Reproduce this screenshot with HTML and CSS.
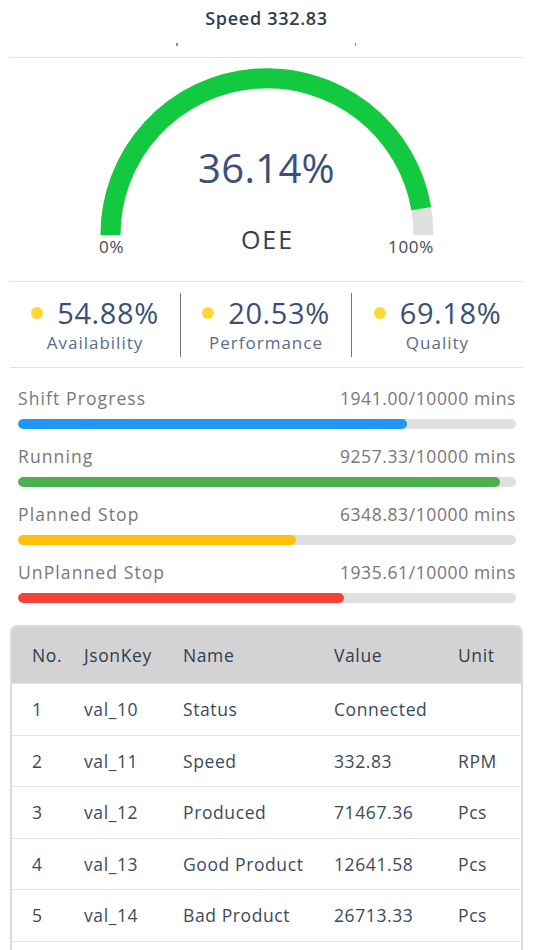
FILE: index.html
```html
<!DOCTYPE html>
<html>
<head>
<meta charset="utf-8">
<link rel="stylesheet" href="styles.css">
</head>
<body>
<div class="page">
  <header class="top">
    <div class="title">Speed 332.83</div>
    <div class="marks"><span class="mark"></span><span class="mark"></span></div>
  </header>

  <section class="gauge">
    <svg class="gauge-svg" width="354" height="186" viewBox="0 0 354 186">
      <path d="M 20.5 177 A 156.5 156.5 0 0 1 333.5 177" fill="none" stroke="#e0e0e0" stroke-width="20"/>
      <path d="M 20.5 177 A 156.5 156.5 0 0 1 331.3 150.6" fill="none" stroke="#12c940" stroke-width="20"/>
    </svg>
    <div class="gauge-value">36.14%</div>
    <div class="gauge-name">OEE</div>
    <div class="gauge-min">0%</div>
    <div class="gauge-max">100%</div>
  </section>

  <section class="stats">
    <div class="stat">
      <div class="stat-value"><span class="dot"></span>54.88%</div>
      <div class="stat-label">Availability</div>
    </div>
    <div class="stat">
      <div class="stat-value"><span class="dot"></span>20.53%</div>
      <div class="stat-label">Performance</div>
    </div>
    <div class="stat">
      <div class="stat-value"><span class="dot"></span>69.18%</div>
      <div class="stat-label">Quality</div>
    </div>
  </section>

  <section class="progress">
    <div class="prow">
      <div class="plabels"><span>Shift Progress</span><span>1941.00/10000 mins</span></div>
      <div class="track"><div class="fill blue" style="width:78.2%"></div></div>
    </div>
    <div class="prow">
      <div class="plabels"><span>Running</span><span>9257.33/10000 mins</span></div>
      <div class="track"><div class="fill green" style="width:96.8%"></div></div>
    </div>
    <div class="prow">
      <div class="plabels"><span>Planned Stop</span><span>6348.83/10000 mins</span></div>
      <div class="track"><div class="fill yellow" style="width:55.8%"></div></div>
    </div>
    <div class="prow">
      <div class="plabels"><span>UnPlanned Stop</span><span>1935.61/10000 mins</span></div>
      <div class="track"><div class="fill red" style="width:65.4%"></div></div>
    </div>
  </section>

  <section class="card">
    <div class="trow thead">
      <div>No.</div><div>JsonKey</div><div>Name</div><div>Value</div><div>Unit</div>
    </div>
    <div class="trow">
      <div>1</div><div>val_10</div><div>Status</div><div>Connected</div><div></div>
    </div>
    <div class="trow">
      <div>2</div><div>val_11</div><div>Speed</div><div>332.83</div><div>RPM</div>
    </div>
    <div class="trow">
      <div>3</div><div>val_12</div><div>Produced</div><div>71467.36</div><div>Pcs</div>
    </div>
    <div class="trow">
      <div>4</div><div>val_13</div><div>Good Product</div><div>12641.58</div><div>Pcs</div>
    </div>
    <div class="trow">
      <div>5</div><div>val_14</div><div>Bad Product</div><div>26713.33</div><div>Pcs</div>
    </div>
    <div class="trow"></div>
  </section>
</div>
</body>
</html>
```

FILE: styles.css
```css
* { box-sizing: border-box; }
html, body { margin: 0; padding: 0; background: #ffffff; }
body {
  font-family: "Open Sans", "Liberation Sans", sans-serif;
  color: #2c3e50;
  overflow: hidden;
}
.page {
  padding: 0 11px 0 10px;
}
.top {
  height: 58px;
  border-bottom: 1.5px solid #e3e3e3;
  display: flex;
  flex-direction: column;
  align-items: center;
}
.title {
  margin-top: 6px;
  font-size: 18px;
  font-weight: 600;
  letter-spacing: 0.7px;
  color: #2c3e50;
  line-height: 24px;
}
.marks {
  margin-top: 13px;
  width: 100%;
  display: flex;
  justify-content: space-between;
  padding: 0 167px 0 166px;
}
.mark {
  width: 1.5px;
  height: 3px;
  background: #8a8a8a;
}

.gauge {
  position: relative;
  height: 224px;
  border-bottom: 1.5px solid #e3e3e3;
  display: flex;
  justify-content: center;
}
.gauge-svg {
  margin-left: 1px;
}
.gauge-value {
  position: absolute;
  left: 0; right: 0;
  top: 82px;
  text-align: center;
  font-size: 40px;
  font-weight: 400;
  color: #3b4f7a;
  letter-spacing: 0.3px;
}
.gauge-name {
  position: absolute;
  left: 0; right: 0;
  top: 164px;
  text-align: center;
  font-size: 25px;
  color: #2f4058;
  letter-spacing: 2px;
  padding-left: 2px;
}
.gauge-min, .gauge-max {
  position: absolute;
  top: 177px;
  font-size: 17px;
  color: #444b55;
  letter-spacing: 0.7px;
}
.gauge-min { left: 89px; }
.gauge-max { left: 378px; }

.stats {
  height: 86px;
  border-bottom: 1.5px solid #e3e3e3;
  display: grid;
  grid-template-columns: 171px 171px 1fr;
  align-items: center;
}
.stat {
  height: 64px;
  display: flex;
  flex-direction: column;
  align-items: center;
  justify-content: center;
  border-right: 1.5px solid #777;
}
.stat:last-child { border-right: none; }
.stat-value {
  display: flex;
  align-items: center;
  font-size: 29px;
  line-height: 36px;
  color: #3b4f7a;
  letter-spacing: 0.6px;
}
.dot {
  width: 12px;
  height: 12px;
  border-radius: 50%;
  background: #fdd835;
  margin-right: 14px;
}
.stat-label {
  font-size: 17px;
  line-height: 24px;
  color: #5a6b8e;
  letter-spacing: 1px;
}

.progress {
  padding: 18px 7px 0 8px;
}
.prow {
  height: 58px;
}
.plabels {
  display: flex;
  justify-content: space-between;
  font-size: 17.5px;
  line-height: 24px;
  color: #777777;
  letter-spacing: 0.6px;
}
.plabels span:first-child { letter-spacing: 1.1px; }
.track {
  margin-top: 9px;
  height: 10px;
  border-radius: 5px;
  background: #e0e0e0;
  overflow: hidden;
}
.fill { height: 100%; border-radius: 5px; }
.blue { background: #2196f3; }
.green { background: #4caf50; }
.yellow { background: #ffc107; }
.red { background: #f44336; }

.card {
  margin-top: 7px;
  border: 2px solid #dcdcdc;
  border-radius: 7px;
  overflow: hidden;
}
.trow {
  display: grid;
  grid-template-columns: 52px 99px 151px 124px 1fr;
  padding-left: 20px;
  height: 51.5px;
  align-items: center;
  border-top: 1.5px solid #e3e3e3;
  font-size: 17.5px;
  color: #3b4a5e;
  letter-spacing: 0.6px;
}
.trow.thead {
  border-top: none;
  height: 56px;
  background: #d3d3d3;
  font-weight: 500;
  color: #2c3e50;
}
```
